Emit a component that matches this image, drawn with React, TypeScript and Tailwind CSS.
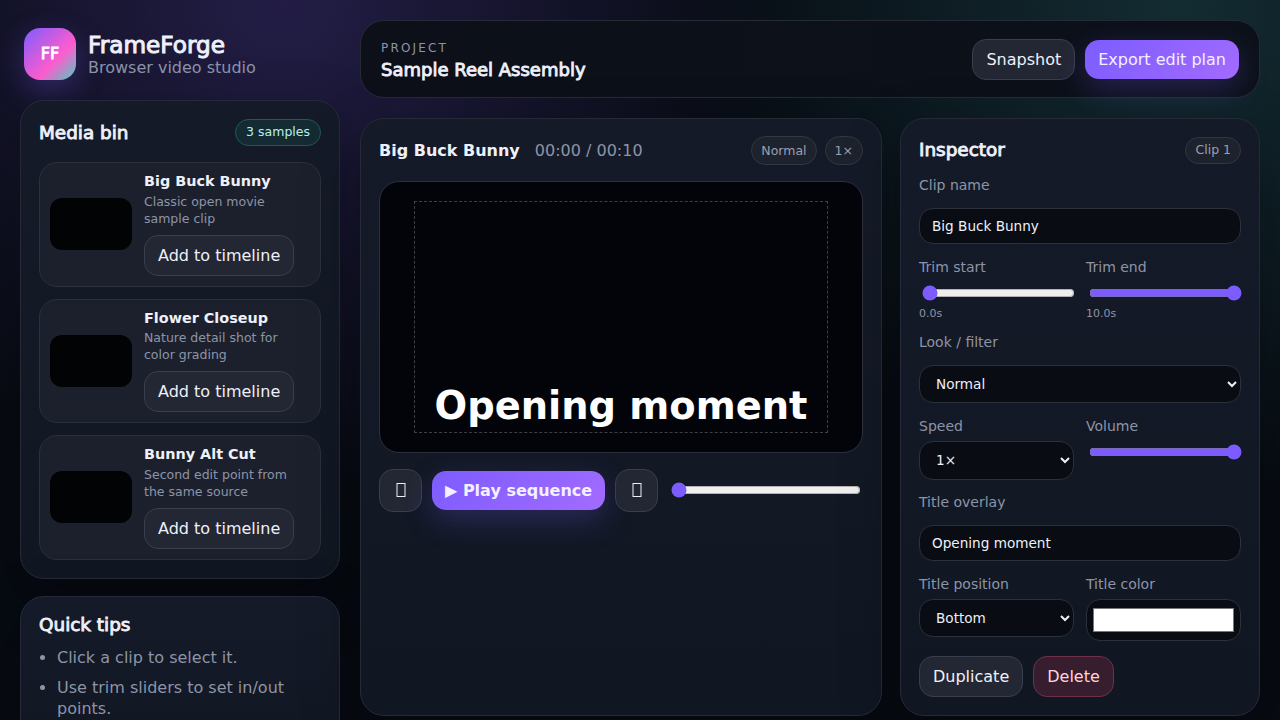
import { useState } from "react"

const clips = [
  { name: "Big Buck Bunny", desc: "Classic open movie sample clip" },
  { name: "Flower Closeup", desc: "Nature detail shot for color grading" },
  { name: "Bunny Alt Cut", desc: "Second edit point from the same source" },
]

const panel =
  "rounded-[24px] border border-[#262a36] bg-[linear-gradient(180deg,#151a28,#101722)] shadow-[0_20px_60px_rgba(0,0,0,0.25)]"
const btn = "rounded-[14px] border border-[#3a3e4b] bg-[#232733] text-[#eef0fa]"
const primary =
  "rounded-[14px] bg-[linear-gradient(135deg,#7c5cff,#a36bff)] text-[#f3f0ff] shadow-[0_10px_30px_rgba(124,92,255,0.25)]"
const field =
  "w-full rounded-[14px] border border-[#2c303b] bg-[#090c13] text-[13.6px] text-[#eef0fa] outline-none"
const label = "block text-[14px] leading-[20px] text-[#8d94a8]"
const pill =
  "flex items-center rounded-full border border-[#333745] bg-[#1e222d] px-[9px] text-[12.5px] text-[#99a0b4]"
const heading = "text-[18.4px] font-normal text-[#eef0fa] [-webkit-text-stroke:0.9px_currentColor]"

function ClipCard({ name, desc }: { name: string; desc: string }) {
  return (
    <div className="flex items-center gap-3 rounded-[18px] border border-[#2c303b] bg-[#1c202c] p-[10px]">
      <div className="h-[52px] w-[82px] shrink-0 rounded-[12px] bg-[#020305]" />
      <div className="min-w-0 flex-1">
        <div className="text-[14.4px] font-bold leading-[17px] text-[#eef0fa]">{name}</div>
        <div className="mt-[2.5px] text-[12.5px] leading-[17px] text-[#8d94a8]">{desc}</div>
        <button className={`${btn} mt-[8px] h-[41px] px-[13px] pt-[1px] text-[16px]`}>Add to timeline</button>
      </div>
    </div>
  )
}

function Range({ value, className = "" }: { value: number; className?: string }) {
  const [v, setV] = useState(value)
  return (
    <input
      type="range"
      min={0}
      max={100}
      value={v}
      onChange={(e) => setV(Number(e.target.value))}
      className={`mb-[2px] ml-[2.5px] mr-[2px] block w-[calc(100%-1.5px)] accent-[#7c5cff] ${className}`}
    />
  )
}

// the skip glyphs show up as empty boxes in the reference
function MissingGlyph() {
  return (
    <svg width="10" height="16" viewBox="0 0 10 16" className="mx-auto" fill="none" stroke="currentColor">
      <rect x="1" y="1.5" width="8" height="13" />
    </svg>
  )
}

export default function App() {
  return (
    <div
      className="grid h-screen grid-cols-[320px_1fr] gap-5 overflow-hidden bg-[#070b12] bg-[radial-gradient(circle_at_22%_0%,#231d46_0%,rgba(35,29,70,0)_40%),radial-gradient(circle_at_92%_0%,#132c32_0%,rgba(19,44,50,0)_36%)] p-5 text-[#eef0fa]"
      style={{ fontFamily: '"DejaVu Sans", sans-serif' }}
    >
      <aside className="flex min-h-0 flex-col gap-[18px]">
        <div className="flex shrink-0 items-center gap-3 px-1 pb-[2px] pt-2">
          <div className="flex h-[52px] w-[52px] items-center justify-center rounded-[16px] bg-[linear-gradient(135deg,#7c5cff,#ff5ccf_62%,#4fd1c5)] text-[16px] text-white shadow-[0_10px_30px_rgba(124,92,255,0.3)] [-webkit-text-stroke:0.8px_currentColor]">
            FF
          </div>
          <div>
            <div className="text-[23.2px] leading-[26px] text-[#eef0fa] [-webkit-text-stroke:1px_currentColor]">
              FrameForge
            </div>
            <div className="text-[16px] leading-[19px] text-[#8d94a8]">Browser video studio</div>
          </div>
        </div>

        <section className={`${panel} shrink-0 p-[18px]`}>
          <div className="flex h-[27px] items-center justify-between">
            <h2 className={heading}>Media bin</h2>
            <span className="flex h-[27px] items-center rounded-full border border-[#1f5a58] bg-[#152b33] px-[10px] text-[12.5px] text-[#b5f2e8]">
              3 samples
            </span>
          </div>
          <div className="mt-4 flex flex-col gap-3">
            {clips.map((c) => (
              <ClipCard key={c.name} {...c} />
            ))}
          </div>
        </section>

        <section className={`${panel} -mt-[1px] h-[160px] shrink-0 p-[18px]`}>
          <h2 className={`${heading} leading-[19px]`}>Quick tips</h2>
          <ul className="mt-[13px] list-disc pl-[18px] text-[16px] leading-[21px] text-[#8d94a8]">
            <li className="mb-[9px]">Click a clip to select it.</li>
            <li>Use trim sliders to set in/out points.</li>
          </ul>
        </section>
      </aside>

      <main className="flex min-h-0 flex-col gap-5">
        <header className="flex h-[77.67px] shrink-0 items-center justify-between rounded-[24px] border border-[#262a36] bg-[linear-gradient(90deg,#0d1019,#0c1119)] px-5">
          <div className="pt-[4px]">
            <div className="text-[12px] leading-[15px] tracking-[0.18em] text-[#8d94a8]">PROJECT</div>
            <div className="mt-[3px] text-[18px] leading-[22px] text-[#eef0fa] [-webkit-text-stroke:0.9px_currentColor]">
              Sample Reel Assembly
            </div>
          </div>
          <div className="flex items-center gap-[10px] pt-[2px]">
            <button className={`${btn} h-[41px] px-[13px] text-[16px]`}>Snapshot</button>
            <button className={`${primary} h-[39px] px-[13px] text-[16px]`}>Export edit plan</button>
          </div>
        </header>

        <div className="grid h-[598px] shrink-0 grid-cols-[1fr_360px] gap-[18px]">
          <section className={`${panel} p-[18px]`}>
            <div className="flex h-[28px] items-center justify-between">
              <div className="flex items-center gap-[15px]">
                <span className="text-[16px] font-bold text-[#eef0fa]">Big Buck Bunny</span>
                <span className="text-[16px] text-[#8d94a8]">00:00 / 00:10</span>
              </div>
              <div className="flex items-center gap-2">
                <span className={`${pill} h-[29px] pt-[1px]`}>Normal</span>
                <span className={`${pill} h-[29px] pt-[1px]`}>1×</span>
              </div>
            </div>

            <div className="relative mt-4 aspect-video w-full rounded-[20px] border border-[#2c303b] bg-[#03040a]">
              <div className="absolute inset-x-[34px] inset-y-[19px] flex items-end justify-center border border-dashed border-[#3c3f48] pb-[3px]">
                <span className="text-[38.4px] font-bold leading-[46px] text-white">Opening moment</span>
              </div>
            </div>

            <div className="mt-4 flex items-center gap-[10px]">
              <button className={`${btn} h-[43px] w-[43px] shrink-0`}>
                <MissingGlyph />
              </button>
              <button className={`${primary} h-[39px] shrink-0 px-[13px] pt-[1px] text-[16px] font-bold`}>
                ▶ Play sequence
              </button>
              <button className={`${btn} h-[43px] w-[43px] shrink-0`}>
                <MissingGlyph />
              </button>
              <Range value={0} className="mt-[2px] min-w-0 flex-1" />
            </div>
          </section>

          <section className={`${panel} p-[18px]`}>
            <div className="flex h-[27px] items-center justify-between">
              <h2 className={heading}>Inspector</h2>
              <span className={`${pill} h-[27px]`}>Clip 1</span>
            </div>

            <label className={`${label} mt-[11px]`}>Clip name</label>
            <input readOnly value="Big Buck Bunny" className={`${field} mt-[13px] h-[36px] px-3`} />

            <div className="mt-[13px] grid grid-cols-2 gap-3">
              <div>
                <label className={label}>Trim start</label>
                <Range value={0} className="mt-[8px]" />
                <div className="mt-[6px] text-[11px] leading-[13px] text-[#8d94a8]">0.0s</div>
              </div>
              <div>
                <label className={label}>Trim end</label>
                <Range value={100} className="mt-[8px]" />
                <div className="mt-[6px] text-[11px] leading-[13px] text-[#8d94a8]">10.0s</div>
              </div>
            </div>

            <label className={`${label} mt-[12px]`}>Look / filter</label>
            <select className={`${field} mt-[13px] h-[38.5px] px-3`}>
              <option>Normal</option>
            </select>

            <div className="mt-[13px] grid grid-cols-2 gap-3">
              <div>
                <label className={label}>Speed</label>
                <select className={`${field} mt-[5px] h-[38.5px] px-3`}>
                  <option>1×</option>
                </select>
              </div>
              <div>
                <label className={label}>Volume</label>
                <Range value={100} className="mt-[8px]" />
              </div>
            </div>

            <label className={`${label} mt-[12px]`}>Title overlay</label>
            <input readOnly value="Opening moment" className={`${field} mt-[13px] h-[36px] px-3`} />

            <div className="mt-[13px] grid grid-cols-2 gap-3">
              <div>
                <label className={label}>Title position</label>
                <select className={`${field} mt-[5px] h-[38.5px] px-3`}>
                  <option>Bottom</option>
                </select>
              </div>
              <div>
                <label className={label}>Title color</label>
                <div className={`${field} mt-[5px] flex h-[42px] items-center px-[6px]`}>
                  <div className="h-[24px] w-full border border-[#777] bg-white" />
                </div>
              </div>
            </div>

            <div className="mt-[15px] flex gap-[10px]">
              <button className={`${btn} h-[41px] px-[13px] pt-[1px] text-[16px]`}>Duplicate</button>
              <button className="h-[41px] rounded-[14px] border border-[#70304a] bg-[#361e2e] px-[13px] pt-[1px] text-[16px] text-[#ffd3de]">
                Delete
              </button>
            </div>
          </section>
        </div>
      </main>
    </div>
  )
}
